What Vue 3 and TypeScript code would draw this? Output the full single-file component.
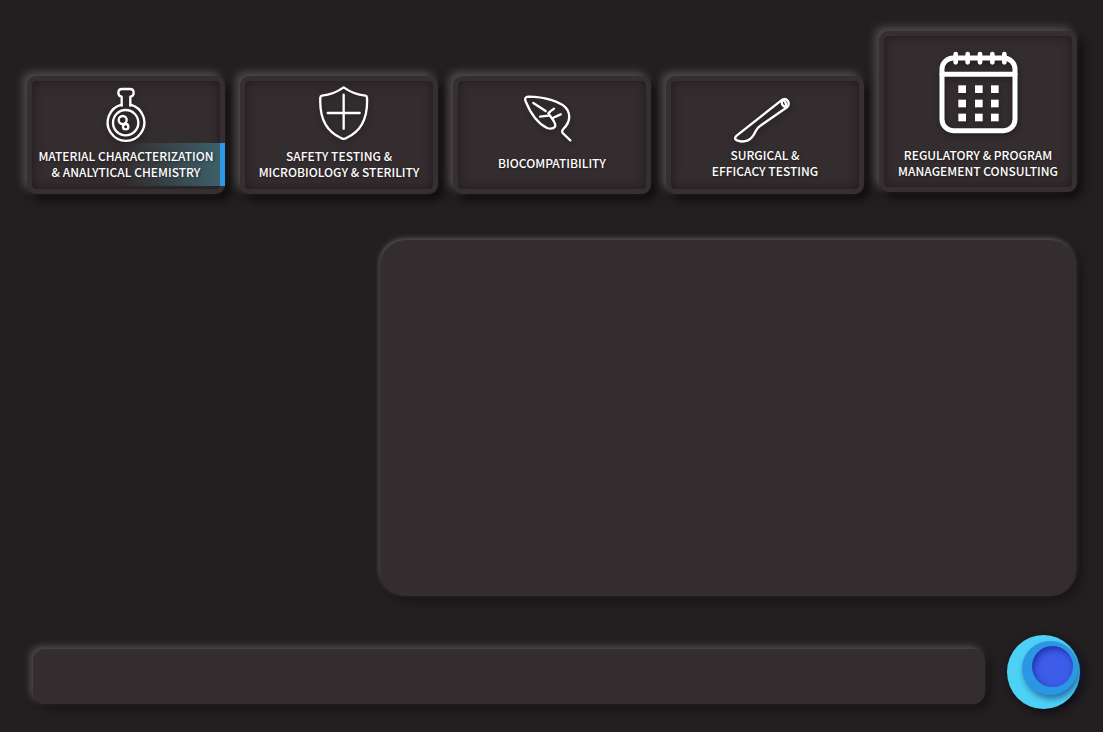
<script setup lang="ts">
import { ref } from 'vue'

interface Service {
  id: string
  lines: string[]
}

const services: Service[] = [
  { id: 'chemistry', lines: ['MATERIAL CHARACTERIZATION', '& ANALYTICAL CHEMISTRY'] },
  { id: 'safety', lines: ['SAFETY TESTING &', 'MICROBIOLOGY & STERILITY'] },
  { id: 'bio', lines: ['BIOCOMPATIBILITY'] },
  { id: 'surgical', lines: ['SURGICAL &', 'EFFICACY TESTING'] },
  { id: 'regulatory', lines: ['REGULATORY & PROGRAM', 'MANAGEMENT CONSULTING'] },
]

const active = ref('chemistry')
const query = ref('')
const springs = [271, 307, 344, 381, 417]
const columns = [279, 329, 377]
const rows = [210, 253, 295]
</script>

<template>
  <div class="page">
    <nav class="services" aria-label="Services">
      <button
        v-for="s in services"
        :key="s.id"
        type="button"
        class="card"
        :class="[s.id, { active: s.id === active }]"
        :aria-pressed="s.id === active"
        @click="active = s.id"
      >
        <svg v-if="s.id === 'chemistry'" class="icon" viewBox="284 80 126 168" width="42" height="56" aria-hidden="true">
          <path d="M334 136V109Q324 107 324 97Q324 86 335 86H359Q370 86 370 97Q370 107 360 109V136" />
          <path d="M334 133A55 55 0 1 0 360 133" />
          <circle cx="346" cy="187" r="38" />
          <circle cx="337" cy="179" r="12" />
          <circle cx="346" cy="199" r="8" />
        </svg>
        <svg v-else-if="s.id === 'safety'" class="icon" viewBox="235 79 183 168" width="61" height="56" aria-hidden="true">
          <path d="M339 83C321 96 299 105 274 108Q269 109 269 114C266 174 284 214 331 235Q339 240 347 235C394 214 412 174 409 114Q409 109 404 108C379 105 357 96 339 83Z" />
          <path d="M339 105V207M291 160H387" />
        </svg>
        <svg v-else-if="s.id === 'bio'" class="icon" viewBox="248 102 177 144" width="59" height="48" aria-hidden="true">
          <path d="M390 241L367 219Q363 214 369 207C385 191 392 172 382 151C367 124 309 110 264 110Q251 111 256 124C269 156 292 190 320 204Q337 209 344 200Q348 193 334 174L324 160L330 154L341 146" />
          <path d="M279 129L316 153M299 170L326 167M337 174L361 163" />
        </svg>
        <svg v-else-if="s.id === 'surgical'" class="icon" viewBox="236 108 192 144" width="64" height="48" aria-hidden="true">
          <path d="M381 121L247 227Q237 236 248 241C267 248 282 244 294 230C307 215 302 207 318 197L398 142Q407 133 400 122Q392 113 381 121Z" />
          <path d="M383 121Q379 134 393 142M387 121Q396 126 395 140" />
        </svg>
        <svg v-else class="icon" viewBox="218 104 243 252" width="81" height="84" aria-hidden="true">
          <rect x="230" y="128" width="219" height="218" rx="34" stroke-width="15" />
          <path d="M230 177H449" stroke-width="15" />
          <path v-for="x in springs" :key="x" :d="`M${x} 116V141`" stroke-width="14" />
          <g class="days">
            <template v-for="y in rows" :key="y">
              <rect v-for="x in columns" :key="x" :x="x" :y="y" width="23" height="23" />
            </template>
          </g>
        </svg>
        <span class="label">
          <span v-for="line in s.lines" :key="line" class="line">{{ line }}</span>
        </span>
      </button>
    </nav>

    <main class="panel"></main>

    <form class="bar" @submit.prevent>
      <input v-model="query" class="field" type="text" aria-label="Message" />
      <button class="orb" type="submit" aria-label="Send">
        <span class="ring"><span class="core"></span></span>
      </button>
    </form>
  </div>
</template>

<style>
body {
  background: #231f20;
}
</style>

<style scoped>
.page {
  box-sizing: border-box;
  min-height: 100vh;
  padding: 31px 26px 23px;
  display: flex;
  flex-direction: column;
  background: #231f20;
  font-family: "Noto Sans CJK JP", "Noto Sans", sans-serif;
}

.services {
  display: grid;
  grid-template-columns: repeat(5, minmax(0, 1fr));
  gap: 15px;
  align-items: end;
  margin-left: 1px;
}

.card {
  position: relative;
  box-sizing: border-box;
  min-height: 118px;
  padding: 0 0 9px;
  display: flex;
  flex-direction: column;
  align-items: center;
  justify-content: flex-end;
  gap: 6px;
  border: 5px solid #352f31;
  border-radius: 9px;
  background: #342d2f;
  color: #fff;
  font: inherit;
  cursor: pointer;
  box-shadow:
    inset 0 0 12px rgba(18, 14, 16, 0.6),
    -4px -4px 8px #4f4c4d,
    5px 6px 10px #0e0c0d;
}

.chemistry {
  gap: 5px;
}

.bio {
  padding-bottom: 18px;
  gap: 13px;
}

.surgical {
  padding-bottom: 10px;
  gap: 3px;
}

.regulatory {
  min-height: 161px;
  margin-bottom: 2px;
  padding-bottom: 8px;
  gap: 13px;
}

.card.active::after {
  content: "";
  position: absolute;
  right: -5px;
  bottom: 3px;
  box-sizing: border-box;
  width: 55%;
  height: 43px;
  border-right: 5px solid #2b97e5;
  background: linear-gradient(90deg, rgba(62, 105, 116, 0), rgba(62, 105, 116, 0.85));
}

.icon {
  position: relative;
  z-index: 1;
  flex: none;
  fill: none;
  stroke: #fff;
  stroke-width: 7;
  stroke-linecap: round;
  stroke-linejoin: round;
  overflow: visible;
  filter: drop-shadow(1px 2px 3px rgba(0, 0, 0, 0.4));
}

.days {
  fill: #fff;
  stroke: none;
}

.label {
  position: relative;
  z-index: 1;
  font-size: 12px;
  font-weight: 500;
  line-height: 16px;
  text-shadow: 1px 1px 3px rgba(0, 0, 0, 0.4);
}

.line {
  display: block;
  white-space: nowrap;
}

.panel {
  flex: 1;
  width: 66.2%;
  min-height: 200px;
  margin: 46px 1px 53px auto;
  border-radius: 26px;
  background: #342d2f;
  box-shadow:
    -1px -2px 5px #555253,
    5px 5px 10px #171415;
}

.bar {
  display: flex;
  align-items: center;
  gap: 22px;
  margin: -14px -3px 0 7px;
}

.field {
  box-sizing: border-box;
  flex: 1;
  min-width: 0;
  height: 55px;
  margin-top: 8px;
  padding: 0 16px;
  border: 0;
  border-radius: 12px;
  outline: 0;
  background: #342d2f;
  color: #fff;
  font: inherit;
  font-size: 14px;
  box-shadow:
    -3px -3px 7px #504d4e,
    4px 4px 8px #151213;
}

.orb {
  box-sizing: border-box;
  flex: none;
  width: 73px;
  height: 74px;
  padding: 6px 2px 14px 15px;
  border: 0;
  border-radius: 50%;
  background: #4dd2f6;
  cursor: pointer;
  box-shadow: 3px 3px 8px #0b0a18;
}

.ring {
  box-sizing: border-box;
  display: block;
  width: 56px;
  height: 54px;
  padding: 5px 5px 8px 10px;
  border-radius: 50%;
  background: #2b97e2;
  box-shadow: 2px 4px 6px rgba(20, 60, 130, 0.65);
}

.core {
  display: block;
  width: 41px;
  height: 41px;
  border-radius: 50%;
  background: #3d5ce8;
  box-shadow: inset 2px 3px 6px #1c33a8;
}
</style>
